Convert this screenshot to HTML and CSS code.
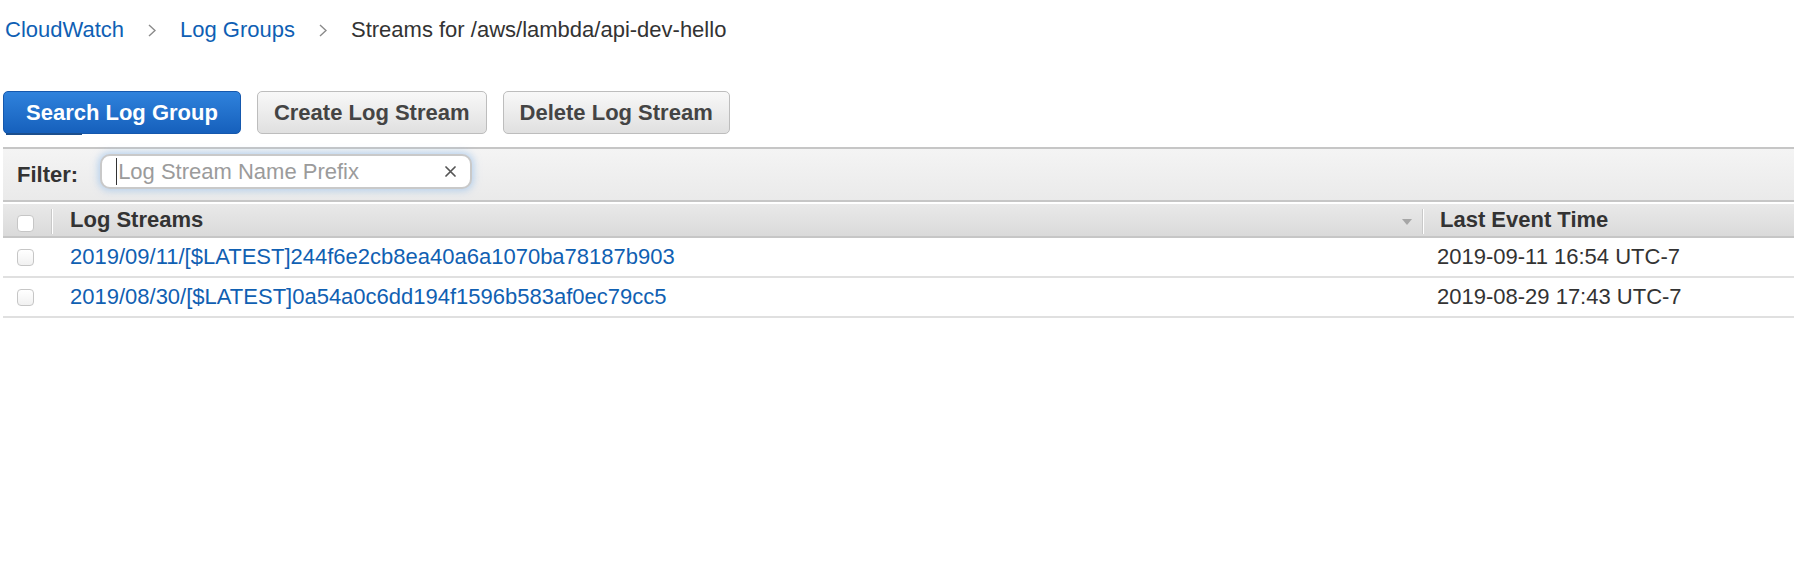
FILE: index.html
```html
<!DOCTYPE html>
<html lang="en">
<head>
<meta charset="utf-8">
<title>CloudWatch Log Streams</title>
<link rel="stylesheet" href="styles.css">
</head>
<body>
<div class="page">
  <nav class="crumbs">
    <a href="#" class="crumb-link">CloudWatch</a>
    <span class="sep"><svg width="8" height="13" viewBox="0 0 8 13"><polyline points="1,1 7,6.5 1,12" fill="none" stroke="#8a8a8a" stroke-width="1.4"/></svg></span>
    <a href="#" class="crumb-link">Log Groups</a>
    <span class="sep"><svg width="8" height="13" viewBox="0 0 8 13"><polyline points="1,1 7,6.5 1,12" fill="none" stroke="#8a8a8a" stroke-width="1.4"/></svg></span>
    <span class="crumb-current">Streams for /aws/lambda/api-dev-hello</span>
  </nav>

  <div class="actions">
    <button class="btn btn-primary">Search Log Group</button>
    <button class="btn">Create Log Stream</button>
    <button class="btn">Delete Log Stream</button>
  </div>

  <div class="filterbar">
    <span class="filter-label">Filter:</span>
    <div class="filter-input">
      <span class="caret"></span>
      <span class="placeholder">Log Stream Name Prefix</span>
      <span class="clear"><svg width="11" height="11" viewBox="0 0 11 11"><path d="M1 1 L10 10 M10 1 L1 10" stroke="#555" stroke-width="1.7" stroke-linecap="round"/></svg></span>
    </div>
  </div>

  <div class="table">
    <div class="thead">
      <div class="cell-check th-check"><span class="checkbox"></span></div>
      <div class="th th-name">
        <span class="th-sep"></span>
        <span class="th-text">Log Streams</span>
        <span class="sort-arrow"></span>
      </div>
      <div class="th th-time">
        <span class="th-sep"></span>
        <span class="th-text th-text-time">Last Event Time</span>
      </div>
    </div>
    <div class="row">
      <div class="cell-check"><span class="checkbox"></span></div>
      <div class="td td-name"><a href="#" class="stream-link">2019/09/11/[$LATEST]244f6e2cb8ea40a6a1070ba78187b903</a></div>
      <div class="td td-time">2019-09-11 16:54 UTC-7</div>
    </div>
    <div class="row">
      <div class="cell-check"><span class="checkbox"></span></div>
      <div class="td td-name"><a href="#" class="stream-link">2019/08/30/[$LATEST]0a54a0c6dd194f1596b583af0ec79cc5</a></div>
      <div class="td td-time">2019-08-29 17:43 UTC-7</div>
    </div>
  </div>
</div>
</body>
</html>
```

FILE: styles.css
```css
html, body {
  margin: 0;
  padding: 0;
  background: #ffffff;
}

body {
  font-family: "Liberation Sans", Arial, Helvetica, sans-serif;
  font-size: 22px;
  color: #333333;
}

.page {
  padding: 17px 0 0 3px;
}

/* breadcrumbs */
.crumbs {
  display: flex;
  align-items: center;
  line-height: 26px;
  height: 26px;
  padding-left: 2px;
}

.crumb-link {
  color: #0f5fb4;
  text-decoration: none;
}

.crumb-current {
  color: #333333;
}

.sep {
  display: flex;
  align-items: center;
  margin: 0 24px;
}

/* action buttons */
.actions {
  display: flex;
  gap: 16px;
  margin-top: 48px;
}

.btn {
  position: relative;
  height: 43px;
  padding: 0 16px;
  border: 1px solid #bdbdbd;
  border-radius: 5px;
  background: linear-gradient(#f8f8f8, #e0e0e0);
  color: #444444;
  font-family: "Liberation Sans", Arial, Helvetica, sans-serif;
  font-size: 22px;
  font-weight: bold;
  line-height: 41px;
  cursor: pointer;
}

.btn-primary {
  padding: 0 22px;
  border-color: #1558ad;
  background: linear-gradient(#2f82dc, #1660bc);
  color: #ffffff;
}

.btn-primary::after {
  content: "";
  position: absolute;
  left: 2px;
  bottom: -2px;
  width: 76px;
  height: 2px;
  background: #1c4f8e;
}

/* filter bar */
.filterbar {
  display: flex;
  align-items: center;
  margin-top: 13px;
  height: 51px;
  padding-left: 14px;
  border-top: 2px solid #c6c6c6;
  border-bottom: 2px solid #c6c6c6;
  background: linear-gradient(#f4f4f4, #eaeaea);
}

.filter-label {
  font-weight: bold;
  color: #333333;
  margin-top: 1px;
}

.filter-input {
  align-self: flex-start;
  margin-top: 5px;
  margin-left: 22px;
  width: 372px;
  height: 35px;
  box-sizing: border-box;
  display: flex;
  align-items: center;
  padding: 0 14px 0 14px;
  border: 2px solid #c9c9c9;
  border-radius: 10px;
  background: #ffffff;
  box-shadow: 0 0 7px 2px rgba(140, 185, 235, 0.55);
}

.caret {
  width: 1px;
  height: 27px;
  background: #333333;
  margin-right: 1px;
}

.placeholder {
  color: #9b9b9b;
  flex: 1;
  line-height: 26px;
}

.clear {
  display: flex;
  align-items: center;
}

/* table */
.table {
  margin-top: 2px;
}

.thead,
.row {
  display: grid;
  grid-template-columns: 48px 1371px 1fr;
}

.thead {
  height: 32px;
  border-bottom: 2px solid #c6c6c6;
  background: linear-gradient(#e9e9e9, #dadada);
}

.row {
  height: 38px;
  border-bottom: 2px solid #e0e0e0;
}

.cell-check {
  display: flex;
  align-items: center;
  padding-left: 14px;
}

.checkbox {
  width: 15px;
  height: 15px;
  border: 1px solid #c6c6c6;
  border-radius: 4px;
  background: linear-gradient(#ffffff, #f1f1f1);
  display: block;
}

.th-check .checkbox {
  margin-top: 7px;
  background: #ffffff;
}

.th {
  display: flex;
  align-items: center;
  font-weight: bold;
  color: #333333;
}

.th-sep {
  width: 1px;
  height: 25px;
  background: #c9c9c9;
  box-shadow: 1px 0 0 #ffffff;
  margin-top: 2px;
}

.th-text {
  margin-left: 18px;
}

.th-text-time {
  margin-left: 17px;
}

.sort-arrow {
  margin-left: auto;
  margin-right: 10px;
  margin-top: 4px;
  width: 0;
  height: 0;
  border-left: 5px solid transparent;
  border-right: 5px solid transparent;
  border-top: 6px solid #a6a6a6;
}

.td {
  display: flex;
  align-items: center;
}

.td-name {
  padding-left: 19px;
}

.td-time {
  padding-left: 15px;
  color: #333333;
}

.stream-link {
  color: #1060b2;
  text-decoration: none;
}
```
